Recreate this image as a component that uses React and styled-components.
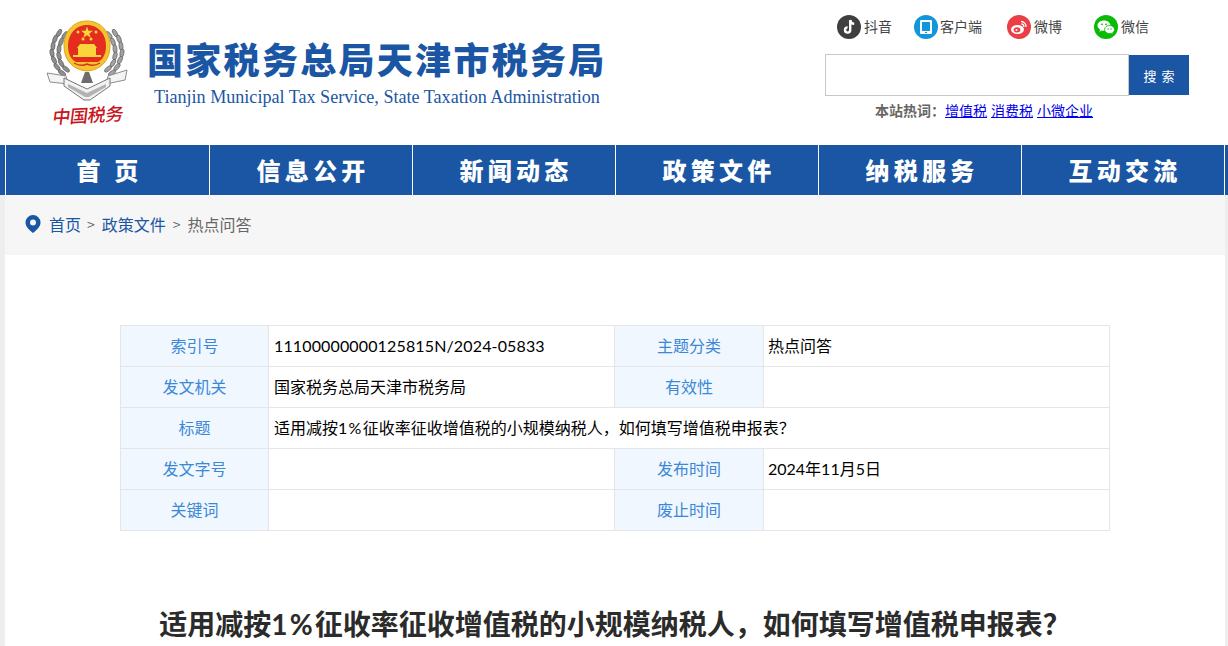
import styled, { createGlobalStyle } from "styled-components";

const GlobalStyle = createGlobalStyle`
    html, body {
        margin: 0;
        padding: 0;
        height: 646px;
        overflow: hidden;
        background: #eeeeee;
        font-family: "Noto Sans CJK SC", "Liberation Sans", sans-serif;
    }
    * { box-sizing: border-box; }
`;

const BLUE = "#1a56a4";

const Header = styled.header`
    height: 145px;
    background: #fff;
    display: flex;
    justify-content: space-between;
`;

const Brand = styled.div`
    display: flex;
    padding: 20px 0 0 46px;
`;

const EmblemWrap = styled.div`
    width: 84px;
    display: flex;
    flex-direction: column;
    align-items: center;
    margin-right: 17px;
`;

const Motto = styled.div`
    font-size: 18px;
    line-height: 24px;
    margin-top: 0;
    color: #c8161d;
    font-weight: 500;
    letter-spacing: -0.5px;
    white-space: nowrap;
    transform: skewX(-10deg) rotate(-3deg);
`;

const BrandText = styled.div`
    display: flex;
    flex-direction: column;
    padding-top: 14px;
`;

const BrandTitle = styled.h1`
    margin: 0;
    font-size: 36px;
    line-height: 48px;
    font-weight: 900;
    letter-spacing: 2.3px;
    color: ${BLUE};
    white-space: nowrap;
`;

const BrandSub = styled.div`
    margin: 3px 0 0 7px;
    font-family: "Liberation Serif", serif;
    font-size: 18.1px;
    line-height: 24px;
    color: ${BLUE};
    white-space: nowrap;
`;

const Tools = styled.div`
    width: 403px;
    padding-top: 15px;
    display: flex;
    flex-direction: column;
`;

const Socials = styled.div`
    display: flex;
    height: 24px;
    padding-left: 12px;
    line-height: 22px;
`;

const Social = styled.a`
    display: flex;
    align-items: center;
    width: ${(p) => p.$w}px;
    font-size: 14px;
    color: #444;
    gap: ${(p) => p.$gap}px;
    white-space: nowrap;
`;

const SocialName = styled.span`
    margin-top: -2px;
`;

const Dot = styled.span`
    width: 24px;
    height: 24px;
    border-radius: 50%;
    background: ${(p) => p.$bg};
    display: flex;
    align-items: center;
    justify-content: center;
    flex: none;
`;

const SearchRow = styled.form`
    display: flex;
    margin-top: 15px;
    height: 42px;
`;

const SearchInput = styled.input`
    width: 304px;
    height: 42px;
    border: 1px solid #c8c8c8;
    background: #fff;
    outline: none;
`;

const SearchButton = styled.button`
    width: 60px;
    height: 40px;
    margin-top: 1px;
    border: none;
    background: ${BLUE};
    color: #fff;
    font-family: inherit;
    font-size: 13px;
    letter-spacing: 5px;
    padding: 0 0 0 5px;
`;

const Hot = styled.div`
    margin-top: 3px;
    padding-left: 50px;
    font-size: 14px;
    line-height: 22px;
    color: #666;
    white-space: nowrap;
`;

const HotLabel = styled.b`
    font-weight: 700;
`;

const HotLink = styled.a`
    color: #0000ee;
    text-decoration: underline;
    margin-right: 4px;
`;

const Nav = styled.nav`
    height: 50px;
    background: ${BLUE};
    display: flex;
    padding-left: 5px;
`;

const NavItem = styled.a`
    width: ${(p) => p.$w}px;
    border-left: 1px solid #fff;
    border-right: ${(p) => (p.$last ? "1px solid #fff" : "none")};
    color: #fff;
    font-size: 24px;
    font-weight: 900;
    letter-spacing: 4.2px;
    padding-left: 4px;
    text-align: center;
    line-height: 49px;
    white-space: pre;
`;

const Main = styled.main`
    width: 1220px;
    margin-left: 5px;
    background: #fff;
    height: 451px;
`;

const Crumbs = styled.div`
    height: 60px;
    background: #f6f6f6;
    display: flex;
    align-items: center;
    padding: 0 0 2px 20px;
    font-size: 16px;
    color: #666;
`;

const Crumb = styled.a`
    color: ${BLUE};
    margin: ${(p) => (p.$first ? "0 -1px 0 8px" : "0")};
`;

const Sep = styled.span`
    margin: 0 7px;
    font-size: 14px;
    color: #666;
`;

const InfoTable = styled.table`
    width: 989px;
    margin: 70px 0 0 115px;
    border-collapse: collapse;
    table-layout: fixed;
    font-family: "Lato", "Noto Sans CJK SC", sans-serif;
    font-size: 16px;
`;

const Label = styled.th`
    height: 41px;
    padding: 0 0 2px;
    border: 1px solid #e5e5e5;
    background: #f1f7fe;
    color: #3b88d8;
    font-weight: 400;
    text-align: center;
`;

const Value = styled.td`
    height: 41px;
    padding: 0 5px 2px ${(p) => (p.$right ? 4 : 5)}px;
    border: 1px solid #e5e5e5;
    color: #000;
    white-space: nowrap;
`;

const IndexNo = styled.span`
    letter-spacing: 0.14px;
`;

const Percent = styled.span`
    letter-spacing: 0.08em;
`;

const ArticleTitle = styled.h2`
    margin: 72px 0 0;
    text-align: center;
    font-family: "Lato", "Noto Sans CJK SC", sans-serif;
    font-size: 28px;
    line-height: 42px;
    font-weight: 700;
    color: #2b2b2b;
    white-space: nowrap;
`;

// wheat grains down the left of the wreath, mirrored for the right
const grains = [
    [13, 13, -60], [9, 19, -70], [7, 26, -85], [6, 33, 80], [8, 40, 65], [11, 47, 50], [16, 53, 35],
    [19, 15, -50], [15, 22, -70], [13, 29, -85], [13, 36, 75], [15, 43, 60], [20, 49, 40],
];

function Emblem() {
    return (
        <svg width="84" height="82" viewBox="0 0 84 82">
            {grains.map(([x, y, r]) => (
                <g key={`${x}-${y}`}>
                    <ellipse cx={x} cy={y} rx="4.200" ry="2" fill="#8f8f8f" stroke="#555" strokeWidth="0.600" transform={`rotate(${r} ${x} ${y})`} />
                    <ellipse cx={82 - x} cy={y} rx="4.200" ry="2" fill="#a2a2a2" stroke="#555" strokeWidth="0.600" transform={`rotate(${-r} ${82 - x} ${y})`} />
                </g>
            ))}
            <path d="M1 53 L20 56 L22 64 L4 62Z" fill="#f4f4f4" stroke="#8d8d8d" strokeWidth="1" />
            <path d="M81 50 L62 56 L60 64 L79 60Z" fill="#f4f4f4" stroke="#8d8d8d" strokeWidth="1" />
            <path d="M18 58 L41 69 L64 58 L64 66 L44 80 L38 80 L18 66Z" fill="#f2f2f2" stroke="#777" strokeWidth="1" />
            <path d="M22 64 L41 73 L60 64 L60 67 L43 77 L39 77 L22 67Z" fill="#b3b3b3" />
            <path d="M39 52 h4 l4 11 h-12z" fill="#6d6d6d" />
            <path d="M41 1 C55 1 64 12 64 26 C64 39 56 50 41 51 C26 50 18 39 18 26 C18 12 27 1 41 1Z" fill="#f4c52e" stroke="#dda61e" strokeWidth="1" />
            <path d="M41 5 C52 5 60 14 60 26 C60 35 56 40 52 42 H30 C26 40 22 35 22 26 C22 14 30 5 41 5Z" fill="#e42d1e" />
            <path d="M41 6.500 l1.500 4.300 h4.500 l-3.600 2.700 1.300 4.300 -3.700 -2.600 -3.700 2.600 1.300 -4.300 -3.600 -2.700 h4.500z" fill="#f8d63c" />
            <circle cx="32" cy="12" r="1.500" fill="#f8d63c" />
            <circle cx="50" cy="12" r="1.500" fill="#f8d63c" />
            <circle cx="37" cy="19" r="1.500" fill="#f8d63c" />
            <circle cx="45" cy="19" r="1.500" fill="#f8d63c" />
            <path d="M34 24 h14 l3 4 h-20z M32 28 h18 v7 h-18z" fill="#f8d63c" />
            <path d="M27 35 h28 v2 h-28z" fill="#f8d63c" />
            <path d="M25 41 q8 5 16 1 q8 4 16 -1 l-3 5 -13 4 -13 -4z" fill="#f4c52e" />
            <path d="M28 43 q7 4 13 1 q6 3 13 -1" stroke="#d8301f" strokeWidth="1.400" fill="none" />
        </svg>
    );
}

const socials = [
    {
        name: "抖音", w: 77, gap: 3, bg: "#3f3f3f",
        icon: <path d="M13.2 5v10a2.600 2.600 0 1 1-2.600-2.600M13.200 5c.3 2.400 1.800 3.700 4 3.900" fill="none" stroke="#fff" strokeWidth="2.400" />,
    },
    {
        name: "客户端", w: 93, gap: 2, bg: "#1296db",
        icon: <path fillRule="evenodd" d="M7 5h10a1 1 0 0 1 1 1v12a1 1 0 0 1-1 1H7a1 1 0 0 1-1-1V6a1 1 0 0 1 1-1zm1 2v9h8V7zm3 10v1h2v-1z" fill="#fff" />,
    },
    {
        name: "微博", w: 87, gap: 3, bg: "#ea3f46",
        icon: (
            <>
                <ellipse cx="10.500" cy="14.500" rx="6.500" ry="4.600" fill="#fff" />
                <ellipse cx="10" cy="14.800" rx="3.400" ry="2.600" fill="#ea3f46" />
                <circle cx="9.500" cy="15" r="1" fill="#fff" />
                <path d="M14 6.500a5 5 0 0 1 5 5.500M14.500 9a2.500 2.500 0 0 1 2.300 3" fill="none" stroke="#fff" strokeWidth="1.300" />
            </>
        ),
    },
    {
        name: "微信", w: 70, gap: 3, bg: "#09bb07",
        icon: (
            <>
                <path d="M10 5.500c3.600 0 6.500 2.300 6.500 5.100 0 2.900-2.900 5.200-6.500 5.200-.8 0-1.500-.1-2.200-.3L5.500 16.700l.6-2.200C4.500 13.500 3.500 12.100 3.500 10.600c0-2.800 2.900-5.100 6.500-5.100z" fill="#fff" />
                <path d="M15.500 10.500c2.800 0 5 1.800 5 4 0 1.200-.7 2.300-1.800 3l.4 1.700-1.900-1c-.5.200-1.100.3-1.700.3-2.800 0-5-1.800-5-4s2.200-4 5-4z" fill="#fff" stroke="#09bb07" strokeWidth="0.800" />
                <circle cx="8" cy="9.300" r="0.900" fill="#09bb07" />
                <circle cx="12" cy="9.300" r="0.900" fill="#09bb07" />
                <circle cx="14" cy="14" r="0.700" fill="#09bb07" />
                <circle cx="17" cy="14" r="0.700" fill="#09bb07" />
            </>
        ),
    },
];

const navItems = ["首 页", "信息公开", "新闻动态", "政策文件", "纳税服务", "互动交流"];

export default function App() {
    return (
        <>
            <GlobalStyle />
            <Header>
                <Brand>
                    <EmblemWrap>
                        <Emblem />
                        <Motto>中国税务</Motto>
                    </EmblemWrap>
                    <BrandText>
                        <BrandTitle>国家税务总局天津市税务局</BrandTitle>
                        <BrandSub>Tianjin Municipal Tax Service, State Taxation Administration</BrandSub>
                    </BrandText>
                </Brand>
                <Tools>
                    <Socials>
                        {socials.map((s) => (
                            <Social key={s.name} $w={s.w} $gap={s.gap}>
                                <Dot $bg={s.bg}>
                                    <svg width="24" height="24" viewBox="0 0 24 24">{s.icon}</svg>
                                </Dot>
                                <SocialName>{s.name}</SocialName>
                            </Social>
                        ))}
                    </Socials>
                    <SearchRow>
                        <SearchInput />
                        <SearchButton type="button">搜索</SearchButton>
                    </SearchRow>
                    <Hot>
                        <HotLabel>本站热词：</HotLabel>
                        <HotLink href="#">增值税</HotLink>
                        <HotLink href="#">消费税</HotLink>
                        <HotLink href="#">小微企业</HotLink>
                    </Hot>
                </Tools>
            </Header>
            <Nav>
                {navItems.map((n, i) => (
                    <NavItem key={n} $w={i === 0 || i === navItems.length - 1 ? 204 : 203} $last={i === navItems.length - 1}>{n}</NavItem>
                ))}
            </Nav>
            <Main>
                <Crumbs>
                    <svg width="16" height="18" viewBox="0 0 16 18">
                        <path fillRule="evenodd" d="M8 0a7.500 7.500 0 0 1 7.500 7.500C15.500 12 11 15.500 8 18 5 15.500.5 12 .5 7.500A7.500 7.500 0 0 1 8 0zm0 4.500a3 3 0 1 0 0 6 3 3 0 0 0 0-6z" fill={BLUE} />
                    </svg>
                    <Crumb $first>首页</Crumb>
                    <Sep>&gt;</Sep>
                    <Crumb>政策文件</Crumb>
                    <Sep>&gt;</Sep>
                    <span>热点问答</span>
                </Crumbs>
                <InfoTable>
                    <colgroup>
                        <col style={{ width: 148 }} />
                        <col style={{ width: 346 }} />
                        <col style={{ width: 149 }} />
                        <col style={{ width: 346 }} />
                    </colgroup>
                    <tbody>
                        <tr>
                            <Label>索引号</Label>
                            <Value><IndexNo>11100000000125815N/2024-05833</IndexNo></Value>
                            <Label>主题分类</Label>
                            <Value $right>热点问答</Value>
                        </tr>
                        <tr>
                            <Label>发文机关</Label>
                            <Value>国家税务总局天津市税务局</Value>
                            <Label>有效性</Label>
                            <Value $right />
                        </tr>
                        <tr>
                            <Label>标题</Label>
                            <Value colSpan={3}>适用减按<Percent>1%</Percent>征收率征收增值税的小规模纳税人，如何填写增值税申报表？</Value>
                        </tr>
                        <tr>
                            <Label>发文字号</Label>
                            <Value />
                            <Label>发布时间</Label>
                            <Value $right>2024年11月5日</Value>
                        </tr>
                        <tr>
                            <Label>关键词</Label>
                            <Value />
                            <Label>废止时间</Label>
                            <Value $right />
                        </tr>
                    </tbody>
                </InfoTable>
                <ArticleTitle>适用减按<Percent>1%</Percent>征收率征收增值税的小规模纳税人，如何填写增值税申报表？</ArticleTitle>
            </Main>
        </>
    );
}
